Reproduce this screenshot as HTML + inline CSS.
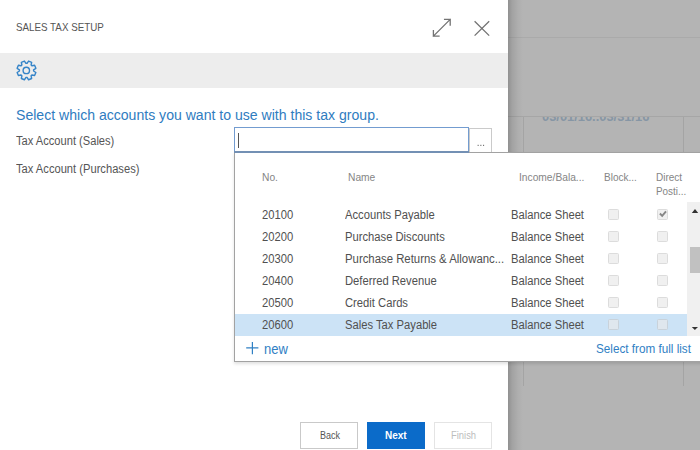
<!DOCTYPE html>
<html><head><meta charset="utf-8">
<style>
*{margin:0;padding:0;box-sizing:border-box}
html,body{width:700px;height:450px;overflow:hidden;background:#b4b4b4;font-family:"Liberation Sans",sans-serif}
.abs{position:absolute}
.t{position:absolute;white-space:nowrap;line-height:1;transform-origin:0 0}
.h{font-size:11px;color:#858585;transform:scaleX(.93)}
.row{position:absolute;left:235px;width:452px;height:22px}
.row .t{font-size:12px;color:#505050;top:4.6px;transform:scaleX(.935)}
.row .n{left:27px}.row .m{left:110px}.row .b{left:276px}
.cb{position:absolute;top:4.5px;width:11px;height:11px;border:1px solid #dcdcdc;border-radius:1.5px;background:#f0f0f0}
.cb.c1{left:373px}.cb.c2{left:422px}
.btn{position:absolute;top:421.5px;width:58px;height:27px}
.btn .t{font-size:10px;top:8px}
</style></head><body>
<!-- background page -->
<div class="abs" style="left:508px;top:37px;width:192px;height:1px;background:#aaaaaa"></div>
<div class="abs" style="left:523px;top:116px;width:1px;height:270px;background:#a4a4a4"></div>
<div class="abs" style="left:683px;top:116px;width:1px;height:270px;background:#a4a4a4"></div>
<div class="abs" style="left:530px;top:116px;width:140px;height:12px;overflow:hidden">
  <div class="t" style="left:11.5px;top:-5.3px;font-size:12.5px;font-weight:bold;color:#8696a5;transform:scaleX(1.03)">03/01/16..03/31/16</div>
</div>
<div class="abs" style="left:508px;top:116px;width:192px;height:1px;background:#a6a6a6"></div>
<div class="abs" style="left:508px;top:0;width:16px;height:450px;background:linear-gradient(to right,rgba(0,0,0,.2),rgba(0,0,0,.1) 4px,rgba(0,0,0,.03) 10px,rgba(0,0,0,0) 15px)"></div>
<!-- dialog -->
<div class="abs" style="left:0;top:0;width:508px;height:450px;background:#fff"></div>
<div class="t" style="left:16px;top:22px;font-size:11px;color:#555;transform:scaleX(.89)">SALES TAX SETUP</div>
<div class="abs" style="left:0;top:53px;width:508px;height:34.5px;background:#ededed"></div>
<div class="t" style="left:16px;top:108px;font-size:14px;color:#2f7cbf;transform:scaleX(1.005)">Select which accounts you want to use with this tax group.</div>
<div class="t" style="left:16px;top:134.6px;font-size:12px;color:#555;transform:scaleX(.927)">Tax Account (Sales)</div>
<div class="t" style="left:16px;top:163px;font-size:12px;color:#555;transform:scaleX(.93)">Tax Account (Purchases)</div>
<div class="abs" style="left:234px;top:127.2px;width:235px;height:25.8px;border:1.6px solid #739cd0;background:#fff"></div>
<div class="abs" style="left:238px;top:133px;width:1.2px;height:14.6px;background:#555"></div>
<div class="abs" style="left:469px;top:128px;width:23px;height:25px;border:1px solid #cacaca;background:#fff"></div>
<div class="btn" style="left:300px;border:1px solid #c9c9c9;background:#fff"><div class="t" style="left:19px;color:#555;transform:scaleX(.9)">Back</div></div>
<div class="btn" style="left:367px;background:#0b6bc9"><div class="t" style="left:18px;top:9.2px;color:#fff;font-weight:bold;transform:scaleX(1)">Next</div></div>
<div class="btn" style="left:434px;border:1px solid #e4e4e4;background:#fff"><div class="t" style="left:15.5px;color:#bdbdbd;transform:scaleX(.94)">Finish</div></div>
<!-- dropdown -->
<div class="abs" style="left:234px;top:152px;width:470px;height:210px;background:#fff;border:1px solid #a2a2a2;box-shadow:0 2px 3px rgba(0,0,0,.12)"></div>
<div class="abs" style="left:234px;top:151.2px;width:235px;height:1.8px;background:#7390b4"></div>
<div class="t h" style="left:262px;top:172px">No.</div>
<div class="t h" style="left:348px;top:172px">Name</div>
<div class="t h" style="left:519px;top:172px">Income/Bala...</div>
<div class="t h" style="left:604px;top:172px;transform:scaleX(.91)">Block...</div>
<div class="t h" style="left:656px;top:172px;transform:scaleX(.91)">Direct</div>
<div class="t h" style="left:656px;top:186px;transform:scaleX(.9)">Posti...</div>

<div class="row" style="top:204px"><div class="t n">20100</div><div class="t m">Accounts Payable</div><div class="t b">Balance Sheet</div><div class="cb c1"></div><div class="cb c2"></div></div>
<div class="row" style="top:226px"><div class="t n">20200</div><div class="t m">Purchase Discounts</div><div class="t b">Balance Sheet</div><div class="cb c1"></div><div class="cb c2"></div></div>
<div class="row" style="top:248px"><div class="t n">20300</div><div class="t m" style="transform:scaleX(.947)">Purchase Returns &amp; Allowanc...</div><div class="t b">Balance Sheet</div><div class="cb c1"></div><div class="cb c2"></div></div>
<div class="row" style="top:270px"><div class="t n">20400</div><div class="t m">Deferred Revenue</div><div class="t b">Balance Sheet</div><div class="cb c1"></div><div class="cb c2"></div></div>
<div class="row" style="top:292px"><div class="t n">20500</div><div class="t m">Credit Cards</div><div class="t b">Balance Sheet</div><div class="cb c1"></div><div class="cb c2"></div></div>
<div class="row" style="top:314px;background:#cce3f6"><div class="t n">20600</div><div class="t m">Sales Tax Payable</div><div class="t b">Balance Sheet</div><div class="cb c1" style="background:#dfe7ee;border-color:#c9d2da"></div><div class="cb c2" style="background:#dfe7ee;border-color:#c9d2da"></div></div>

<div class="abs" style="left:687px;top:202px;width:13px;height:134px;background:#f0f0f0"></div>
<div class="abs" style="left:689.5px;top:246.5px;width:10.5px;height:26px;background:#c1c1c1"></div>
<div class="t" style="left:263.5px;top:341.7px;font-size:14px;color:#3080c4;transform:scaleX(.93)">new</div>
<div class="t" style="left:596px;top:342.5px;font-size:12px;color:#3080c4;transform:scaleX(.975)">Select from full list</div>
<svg class="abs" style="left:0;top:0" width="700" height="450" viewBox="0 0 700 450">
  <g fill="none" stroke="#737373" stroke-width="1.3" stroke-linecap="square">
    <path d="M433.4 36.2 L450.2 19.4 M444.6 19.4 H450.2 V25 M433.4 30.6 V36.2 H439"/>
    <path d="M474.6 21.2 L489.2 35.6 M489.2 21.2 L474.6 35.6" stroke-linecap="butt"/>
  </g>
  <path d="M27.06 63.32 L28.58 61.03 L31.66 62.30 L31.11 65.00 L31.90 65.79 L34.60 65.24 L35.87 68.32 L33.58 69.84 L33.58 70.96 L35.87 72.48 L34.60 75.56 L31.90 75.01 L31.11 75.80 L31.66 78.50 L28.58 79.77 L27.06 77.48 L25.94 77.48 L24.42 79.77 L21.34 78.50 L21.89 75.80 L21.10 75.01 L18.40 75.56 L17.13 72.48 L19.42 70.96 L19.42 69.84 L17.13 68.32 L18.40 65.24 L21.10 65.79 L21.89 65.00 L21.34 62.30 L24.42 61.03 L25.94 63.32Z" fill="none" stroke="#3584c8" stroke-width="1.4" stroke-linejoin="round"/>
  <circle cx="26.3" cy="70.4" r="3.2" fill="none" stroke="#3584c8" stroke-width="1.4"/>
  <g fill="#666"><rect x="477.6" y="144.8" width="1.1" height="1.1"/><rect x="480.3" y="144.8" width="1.1" height="1.1"/><rect x="483" y="144.8" width="1.1" height="1.1"/></g>
  <path d="M659.9 213.5 L662.2 215.9 L666 211.4" fill="none" stroke="#868686" stroke-width="1.9"/>
  <path d="M691.8 213 L695 209 L698.2 213Z M691.8 327 L698 327 L694.9 330Z" fill="#333"/>
  <path d="M246.2 347.9 H258.4 M252.4 341.9 V354.3" stroke="#3080c4" stroke-width="1.2"/>
</svg>
</body></html>
